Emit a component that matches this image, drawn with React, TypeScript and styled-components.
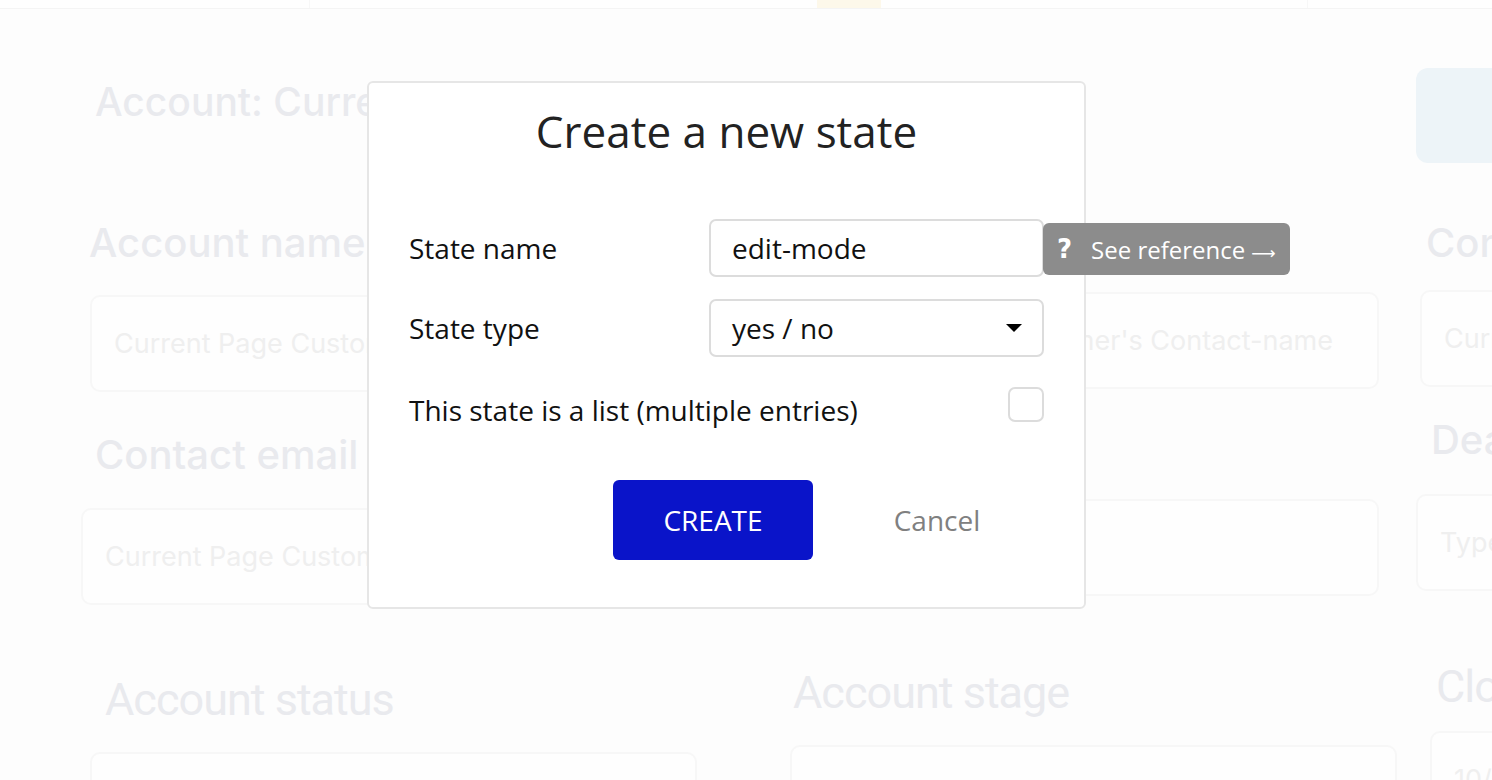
import React from 'react'
import styled, { createGlobalStyle } from 'styled-components'

const GlobalStyle = createGlobalStyle`
  html, body {
    margin: 0;
    padding: 0;
    background: #fdfdfd;
    overflow: hidden;
  }
  * { box-sizing: border-box; }
`

const Screen = styled.div`
  position: relative;
  width: 1492px;
  height: 780px;
  overflow: hidden;
  background: #fdfdfd;
  font-family: 'Open Sans', 'Liberation Sans', sans-serif;
`

/* ---------- faded editor page behind the dialog ---------- */

const TopBar = styled.div`
  height: 9px;
  background: #fefefe;
  border-bottom: 1px solid #f4f4f4;
  display: grid;
  grid-template-columns: 310px 507px 64px 427px 1fr;
`

const TopCell = styled.div<{ $tone?: string; $line?: boolean }>`
  background: ${(p) => p.$tone || 'transparent'};
  border-right: ${(p) => (p.$line ? '1px solid #f7f7f7' : 'none')};
`

const Page = styled.div`
  display: grid;
  grid-template-columns: 617px 719px 1fr;
  padding: 0 0 0 80px;
`

const HeaderRow = styled.div`
  grid-column: 1 / 4;
  display: flex;
  align-items: flex-start;
  height: 155px;
  padding-top: 59px;
`

const PageTitle = styled.h1`
  margin: 10px 0 0 15px;
  font-family: Inter, 'Liberation Sans', sans-serif;
  font-weight: 500;
  font-size: 39px;
  line-height: 48px;
  color: #e9eaee;
  white-space: nowrap;
  width: 1321px;
  overflow: hidden;
`

const InfoCard = styled.div`
  width: 120px;
  height: 95px;
  background: #edf4f8;
  border-radius: 12px;
  flex-shrink: 0;
`

const Column = styled.div`
  display: flex;
  flex-direction: column;
`

const Field = styled.div<{ $dx?: number; $top?: number }>`
  display: flex;
  flex-direction: column;
  margin-left: ${(p) => p.$dx || 0}px;
  margin-top: ${(p) => p.$top || 0}px;
`

const FieldLabel = styled.div<{ $dx?: number; $thin?: boolean }>`
  font-family: ${(p) => (p.$thin ? 'Roboto' : 'Inter')}, 'Liberation Sans', sans-serif;
  font-weight: ${(p) => (p.$thin ? 400 : 500)};
  font-size: ${(p) => (p.$thin ? 45 : 40)}px;
  letter-spacing: ${(p) => (p.$thin ? '-1px' : '0')};
  line-height: 48px;
  height: 48px;
  color: #e9eaee;
  margin-left: ${(p) => p.$dx || 0}px;
  white-space: nowrap;
`

const FieldBox = styled.div<{ $w?: number; $gap?: number }>`
  width: ${(p) => p.$w || 607}px;
  height: 97px;
  margin-top: ${(p) => p.$gap ?? 28}px;
  border: 2px solid #f7f7f7;
  border-radius: 10px;
  background: #fefefe;
  padding: 0 0 0 22px;
  display: flex;
  align-items: center;
  overflow: hidden;
  font-family: Inter, 'Liberation Sans', sans-serif;
  font-size: 27px;
  color: #efefef;
  white-space: nowrap;
`

const BoxText = styled.span<{ $left?: boolean }>`
  flex: 1;
  text-align: ${(p) => (p.$left ? 'left' : 'right')};
  padding-right: ${(p) => (p.$left ? 0 : 44)}px;
`

/* ---------- dialog ---------- */

const Dialog = styled.div`
  position: absolute;
  left: 367px;
  top: 81px;
  width: 719px;
  height: 528px;
  background: #fff;
  border: 2px solid #e6e6e6;
  border-radius: 6px;
  padding: 18px 40px 0 40px;
  display: flex;
  flex-direction: column;
`

const DialogTitle = styled.h2`
  margin: 0;
  text-align: center;
  font-weight: 400;
  font-size: 44px;
  line-height: 60px;
  color: #222;
`

const Form = styled.div`
  margin-top: 58px;
  display: grid;
  grid-template-columns: 300px 335px;
  row-gap: 22px;
`

const Label = styled.div<{ $top?: number }>`
  font-size: 28px;
  line-height: 58px;
  color: #111;
  white-space: nowrap;
  margin-top: ${(p) => p.$top || 0}px;
`

const TextInput = styled.div`
  height: 58px;
  border: 2px solid #dcdcdc;
  border-radius: 7px;
  padding: 0 21px;
  display: flex;
  align-items: center;
  font-size: 28px;
  color: #111;
`

const Select = styled(TextInput)`
  justify-content: space-between;
  padding-right: 20px;
`

const Caret = styled.span`
  width: 0;
  height: 0;
  border-left: 8px solid transparent;
  border-right: 8px solid transparent;
  border-top: 8px solid #000;
`

const CheckCell = styled.div`
  display: flex;
  justify-content: flex-end;
  padding-top: 8px;
`

const Checkbox = styled.div`
  width: 36px;
  height: 35px;
  border: 2px solid #dcdcdc;
  border-radius: 7px;
`

const Actions = styled.div`
  margin-top: 41px;
  padding-left: 204px;
  display: flex;
  gap: 24px;
`

const Button = styled.button<{ $primary?: boolean }>`
  width: 200px;
  height: 80px;
  border: none;
  border-radius: 6px;
  background: ${(p) => (p.$primary ? '#0a14c9' : 'transparent')};
  color: ${(p) => (p.$primary ? '#fff' : '#808080')};
  font-family: 'Open Sans', 'Liberation Sans', sans-serif;
  font-size: 28px;
  padding: 0;
  cursor: pointer;
`

const RefTip = styled.div`
  position: absolute;
  left: 1043px;
  top: 223px;
  width: 247px;
  height: 52px;
  background: #8c8c8c;
  border-radius: 6px;
  display: flex;
  align-items: center;
  padding-left: 14px;
  gap: 19px;
  color: #fff;
  font-size: 24px;
  white-space: nowrap;
`

const TipMark = styled.span`
  font-family: 'DejaVu Sans', sans-serif;
  font-weight: 700;
  font-size: 26px;
  line-height: 1;
`

const TipArrow = styled.span`
  font-family: 'DejaVu Sans', sans-serif;
  font-size: 17px;
  margin-left: 6px;
`

export default function App() {
  return (
    <Screen>
      <GlobalStyle />
      <TopBar>
        <TopCell $line />
        <TopCell />
        <TopCell $tone="#fdf8ea" />
        <TopCell $line />
        <TopCell />
      </TopBar>

      <Page>
        <HeaderRow>
          <PageTitle>Account: Current Page Customer's Account-name</PageTitle>
          <InfoCard />
        </HeaderRow>

        <Column>
          <Field $top={55} $dx={10}>
            <FieldLabel $dx={-1}>Account name</FieldLabel>
            <FieldBox $w={607} $gap={28}>
              <BoxText $left>Current Page Customer's Account-name</BoxText>
            </FieldBox>
          </Field>
          <Field $top={39} $dx={1}>
            <FieldLabel $dx={14}>Contact email</FieldLabel>
            <FieldBox $w={607} $gap={29}>
              <BoxText $left>Current Page Customer's Contact-email</BoxText>
            </FieldBox>
          </Field>
          <Field $top={71} $dx={10}>
            <FieldLabel $dx={15} $thin>Account status</FieldLabel>
            <FieldBox $w={607} $gap={28} />
          </Field>
        </Column>

        <Column>
          <Field $top={61} $dx={93}>
            <FieldLabel>Contact name</FieldLabel>
            <FieldBox $w={589} $gap={19}>
              <BoxText>Current Page Customer's Contact-name</BoxText>
            </FieldBox>
          </Field>
          <Field $top={110} $dx={93}>
            <FieldBox $w={589} $gap={0} />
          </Field>
          <Field $top={73} $dx={93}>
            <FieldLabel $dx={3} $thin>Account stage</FieldLabel>
            <FieldBox $w={607} $gap={28} />
          </Field>
        </Column>

        <Column>
          <Field $top={55} $dx={4}>
            <FieldLabel $dx={6}>Contact phone</FieldLabel>
            <FieldBox $w={300} $gap={23}>
              <BoxText $left>Current Page Customer's phone</BoxText>
            </FieldBox>
          </Field>
          <Field $top={29} $dx={0}>
            <FieldLabel $dx={15}>Deal value</FieldLabel>
            <FieldBox $w={300} $gap={30}>
              <BoxText $left>Type here...</BoxText>
            </FieldBox>
          </Field>
          <Field $top={72} $dx={14}>
            <FieldLabel $dx={6} $thin>Close date</FieldLabel>
            <FieldBox $w={300} $gap={20}>
              <BoxText $left>10/05/2023</BoxText>
            </FieldBox>
          </Field>
        </Column>
      </Page>

      <Dialog>
        <DialogTitle>Create a new state</DialogTitle>
        <Form>
          <Label>State name</Label>
          <TextInput>edit-mode</TextInput>

          <Label>State type</Label>
          <Select>
            <span>yes / no</span>
            <Caret />
          </Select>

          <Label $top={2}>This state is a list (multiple entries)</Label>
          <CheckCell>
            <Checkbox />
          </CheckCell>
        </Form>
        <Actions>
          <Button $primary>CREATE</Button>
          <Button>Cancel</Button>
        </Actions>
      </Dialog>

      <RefTip>
        <TipMark>?</TipMark>
        <span>
          See reference<TipArrow>⟶</TipArrow>
        </span>
      </RefTip>
    </Screen>
  )
}
